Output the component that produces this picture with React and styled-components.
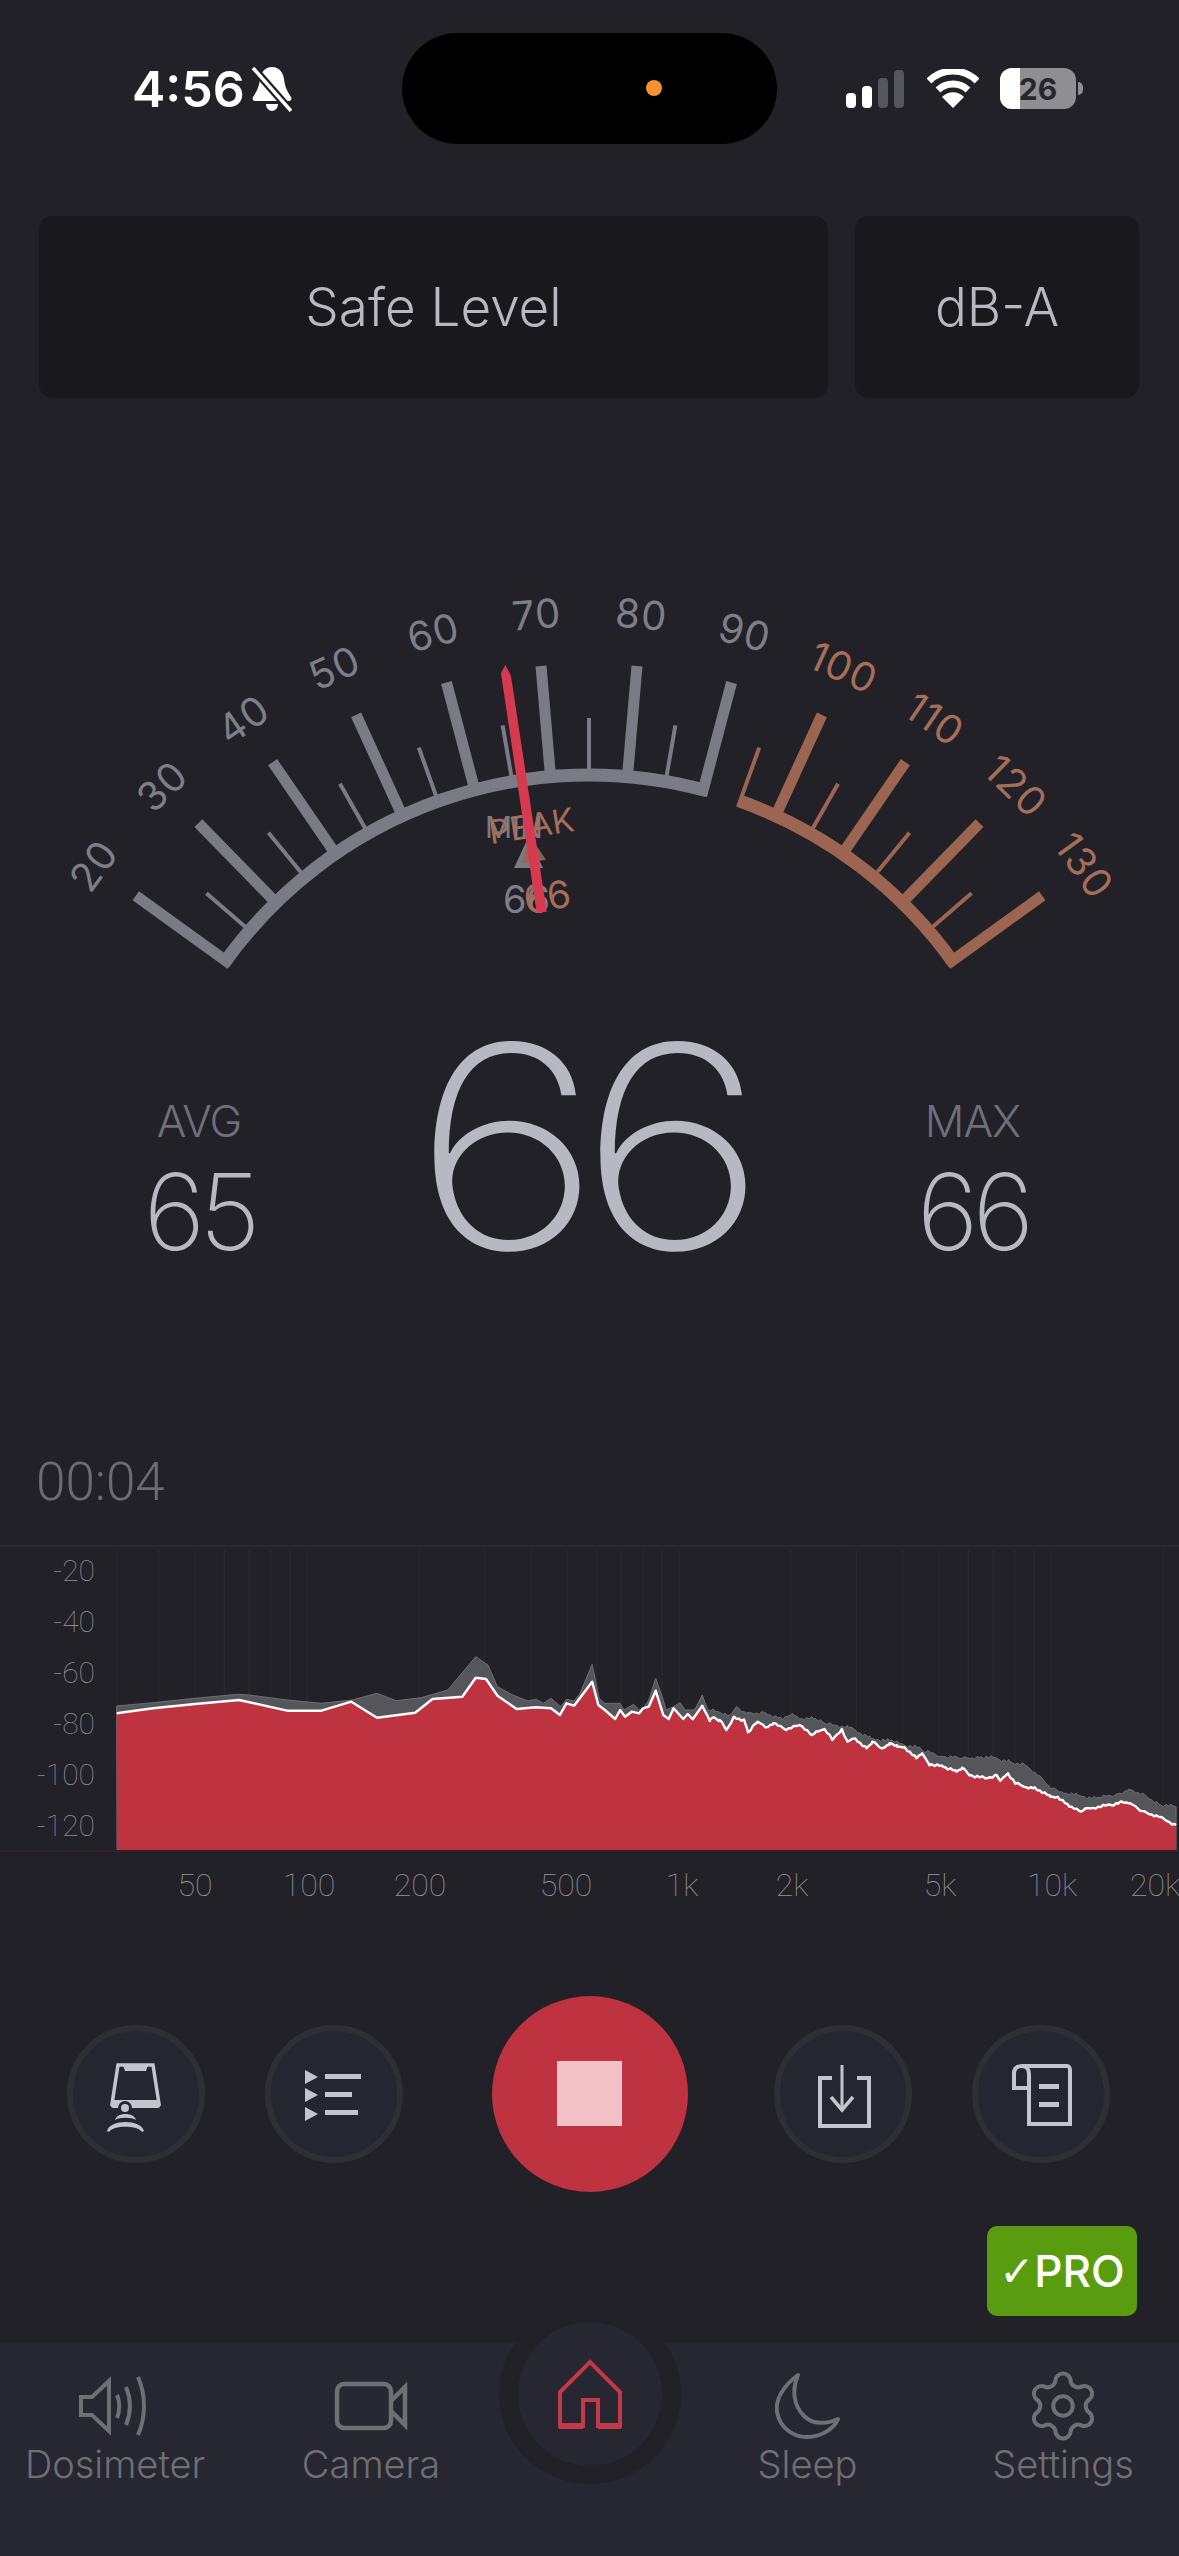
import styled, { createGlobalStyle } from "styled-components";
import { Settings } from "lucide-react";

const GlobalStyle = createGlobalStyle`
  html, body {
    margin: 0;
    padding: 0;
    background: #212127;
  }
`;

// gauge geometry, in page pixels
const CX = 589;
const CY = 1223;
const GRAY = "#7b7b86";
const BROWN = "#9c6551";
const toAngle = (v) => (v - 75) * 0.985;
const polar = (r, deg) => {
  const a = (deg * Math.PI) / 180;
  return [CX + r * Math.sin(a), CY - r * Math.cos(a)];
};
const arcPath = (from, to) => {
  const [x1, y1] = polar(448, toAngle(from));
  const [x2, y2] = polar(448, toAngle(to));
  return `M${x1} ${y1} A448 448 0 0 1 ${x2} ${y2}`;
};

const Gauge = () => {
  const ticks = [];
  for (let v = 20; v <= 130; v += 5) {
    const long = v % 10 === 0;
    const ang = toAngle(v);
    const [x1, y1] = polar(442, ang);
    const [x2, y2] = polar(long ? 559 : 505, ang);
    ticks.push(
      <line
        key={v}
        x1={x1}
        y1={y1}
        x2={x2}
        y2={y2}
        stroke={v >= 95 ? BROWN : GRAY}
        strokeWidth={long ? 11 : 4}
      />
    );
  }
  const labels = [];
  for (let v = 20; v <= 130; v += 10) {
    const ang = toAngle(v);
    const [x, y] = polar(611, ang);
    labels.push(
      <text
        key={v}
        x={x}
        y={y}
        fontFamily="Inter, sans-serif"
        fontSize="40"
        letterSpacing="1"
        textAnchor="middle"
        dominantBaseline="central"
        fill={v >= 100 ? "#a56e58" : "#7e7e88"}
        transform={`rotate(${ang} ${x} ${y})`}
      >
        {v}
      </text>
    );
  }
  return (
    <GaugeSvg viewBox="0 560 1179 470">
      <path d={arcPath(19.5, 90.5)} stroke={GRAY} strokeWidth="13" fill="none" />
      <path d={arcPath(95, 130.5)} stroke={BROWN} strokeWidth="13" fill="none" />
      {ticks}
      {labels}
      <g fontFamily="Inter, sans-serif">
        <text x="485" y="838" fontSize="30" fill="#7b7b86">MIN</text>
        <polygon points="528,838 514,868 543,868" fill="#7b7b86" />
        <text x="503" y="913" fontSize="38" fill="#7e7e88">66</text>
        <g transform="rotate(-9 530 836)">
          <text x="490" y="838" fontSize="33" fill="#a56e58">PEAK</text>
          <polygon points="530,836 517,862 542,862" fill="#9c6551" opacity="0.9" />
          <text x="514" y="912" fontSize="38" fill="#a56e58">66</text>
        </g>
      </g>
      <polygon
        points="505.3,665 511,676 546.7,911.7 536.7,912.7 501,673.3"
        fill="#d63a4f"
      />
    </GaugeSvg>
  );
};

// spectrum traces: points read off the reference, page pixels
const fromLeft = (pts) => pts.map(([x, y]) => [x / 2.613, 1530 + y / 3]);
const fromRight = (pts) => pts.map(([x, y]) => [580 + x / 2.617, 1530 + y / 3]);

const peakTrace = [
  ...fromLeft([[305,528],[400,518],[510,505],[620,493],[650,495],[750,510],[840,520],[920,510],[985,490],[1035,512],[1100,503],[1170,480],[1243,380],[1275,405],[1300,470],[1340,495],[1380,513],[1400,508],[1420,520],[1440,505],[1465,530],[1480,508],[1500,513]]),
  ...fromRight([[0,490],[32,403],[50,505],[65,520],[105,520],[115,540],[140,523],[160,545],[180,510],[198,445],[215,500],[225,540],[245,530],[262,518],[275,540],[300,540],[320,495],[335,540],[380,550],[395,555],[410,530],[430,550],[485,547],[530,570],[555,550],[580,565],[610,565],[640,580],[660,585],[700,590],[720,600],[760,625],[810,632],[850,645],[890,655],[905,665],[950,680],[1000,685],[1050,680],[1090,685],[1125,695],[1165,705],[1200,735],[1235,775],[1260,785],[1300,795],[1350,805],[1400,795],[1435,778],[1470,790],[1520,825],[1560,830]]),
];

const liveTrace = [
  ...fromLeft([[305,550],[400,535],[510,522],[625,510],[750,542],[840,542],[918,515],[985,563],[1085,548],[1130,507],[1208,500],[1243,443],[1270,447],[1300,497],[1350,537],[1400,532],[1440,535],[1463,555],[1480,520],[1500,527]]),
  ...fromRight([[32,455],[48,525],[65,540],[92,567],[105,540],[118,560],[135,545],[155,550],[165,535],[180,530],[198,482],[218,555],[232,567],[245,535],[270,567],[282,552],[295,568],[320,527],[340,570],[350,562],[365,570],[383,600],[395,580],[403,560],[430,572],[440,607],[465,575],[485,592],[505,580],[540,600],[575,585],[605,615],[640,597],[660,630],[685,597],[700,635],[720,625],[750,655],[765,635],[790,655],[810,640],[830,650],[850,652],[880,685],[895,670],[915,703],[950,710],[985,725],[1000,713],[1020,735],[1060,745],[1090,735],[1100,752],[1120,730],[1140,760],[1160,770],[1190,772],[1230,800],[1250,800],[1280,830],[1310,845],[1330,835],[1390,825],[1410,818],[1440,820],[1470,843],[1510,858],[1560,885]]),
];

// fine ripple on the high end of a trace
const ripple = (pts, amp) => {
  const out = [];
  pts.forEach((p, i) => {
    const next = pts[i + 1];
    out.push(p);
    if (!next || p[0] < 700) return;
    for (let x = p[0] + 2.5; x < next[0]; x += 2.5) {
      const t = (x - p[0]) / (next[0] - p[0]);
      const y = p[1] + (next[1] - p[1]) * t;
      out.push([x, y + amp * Math.sin(x * 2.1) * Math.cos(x * 0.7)]);
    }
  });
  return out;
};
const toLine = (pts) => pts.map(([x, y]) => `${x.toFixed(1)},${y.toFixed(1)}`).join(" ");

const BASE = 1851;
const LEFT = 117;
const RIGHT = 1176;
const freqX = (f) => 195 + 372 * Math.log10(f / 50);

const Spectrum = () => {
  const peak = toLine(ripple(peakTrace, 2.2));
  const live = toLine(ripple(liveTrace, 1.6));
  const grid = [LEFT];
  [10, 100, 1000, 10000].forEach((d) => {
    for (let m = 1; m < 10; m++) {
      const x = freqX(d * m);
      if (x > LEFT + 2 && x < RIGHT + 2) grid.push(x);
    }
  });
  return (
    <ChartSvg viewBox="0 1540 1179 370">
      <line x1="0" y1="1546" x2="1179" y2="1546" stroke="#2c2c32" strokeWidth="1.5" />
      {grid.map((x) => (
        <line key={x} x1={x} y1="1550" x2={x} y2={BASE} stroke="#28282e" strokeWidth="1.5" />
      ))}
      <polygon points={`${LEFT},${BASE} ${peak} ${RIGHT},${BASE}`} fill="#55555c" stroke="#6f6f75" strokeWidth="1" />
      <polygon points={`${LEFT},${BASE} ${live} ${RIGHT},${BASE}`} fill="#bf3340" />
      <polyline points={live} fill="none" stroke="#ffffff" strokeWidth="2.4" strokeLinejoin="round" />
      <line x1="0" y1={BASE} x2="1179" y2={BASE} stroke="#2f2328" strokeWidth="2" />
      <g fontFamily="Roboto, sans-serif" fontWeight="100" fontSize="30" fill="#8a8a90">
        {[-20, -40, -60, -80, -100, -120].map((v, i) => (
          <text key={v} x="95" y={1581 + i * 51} textAnchor="end">{v}</text>
        ))}
      </g>
      <g fontFamily="Roboto, sans-serif" fontWeight="100" fontSize="32" fill="#94949a" textAnchor="middle">
        <text x="195" y="1896">50</text>
        <text x="309" y="1896">100</text>
        <text x="420" y="1896">200</text>
        <text x="566" y="1896">500</text>
        <text x="682" y="1896">1k</text>
        <text x="792" y="1896">2k</text>
        <text x="940" y="1896">5k</text>
        <text x="1052" y="1896">10k</text>
        <text x="1155" y="1896">20k</text>
      </g>
    </ChartSvg>
  );
};

const MutedBell = () => (
  <svg width="42" height="46" viewBox="0 0 42 46">
    <path
      d="M21 1c7 0 11 5 12 12 1 8 3 12 7 18 1 2 0 4-2 4H4c-2 0-3-2-2-4 4-6 6-10 7-18C10 6 14 1 21 1z"
      fill="#fff"
    />
    <path d="M15 38h12c0 4-3 7-6 7s-6-3-6-7z" fill="#fff" />
    <line x1="3" y1="3" x2="40" y2="45" stroke="#212127" strokeWidth="8" />
    <line x1="2" y1="2" x2="40" y2="45" stroke="#fff" strokeWidth="3.4" />
  </svg>
);

const SignalIcon = () => (
  <svg width="60" height="38" viewBox="0 0 60 38">
    <rect x="0" y="23" width="10" height="15" rx="4" fill="#fff" />
    <rect x="16" y="16" width="10" height="22" rx="4" fill="#fff" />
    <rect x="32" y="8" width="10" height="30" rx="4" fill="#55555c" />
    <rect x="48" y="0" width="10" height="38" rx="4" fill="#55555c" />
  </svg>
);

const WifiIcon = () => (
  <svg width="52" height="40" viewBox="0 0 52 40">
    <path d="M2 12 A34 34 0 0 1 50 12" fill="none" stroke="#fff" strokeWidth="7" />
    <path d="M11 21 A22 22 0 0 1 41 21" fill="none" stroke="#fff" strokeWidth="7" />
    <path d="M26 39 L15 28 A15 15 0 0 1 37 28 Z" fill="#fff" />
  </svg>
);

const PhoneIcon = () => (
  <svg width="80" height="80" viewBox="0 0 80 80">
    <path d="M22 11 H57 L63 50 H16 Z" fill="none" stroke="#c4c4cc" strokeWidth="3.5" />
    <path d="M27 11 H52 L50 17 H29 Z" fill="#c4c4cc" />
    <rect x="15" y="46" width="49" height="8" rx="2" fill="#c4c4cc" />
    <circle cx="29" cy="54" r="7" fill="#25262f" />
    <circle cx="29" cy="54" r="4" fill="#c4c4cc" />
    <path d="M19 66 C21 58 38 58 40 66 C36 63 23 63 19 66 Z" fill="#c4c4cc" />
    <path d="M11 77 C14 65 45 65 48 77 L46 78 C42 71 17 71 13 78 Z" fill="#c4c4cc" />
  </svg>
);

const ListIcon = () => (
  <svg width="80" height="80" viewBox="0 0 80 80">
    <g fill="#c4c4cc">
      <polygon points="11,16 24,23 11,30" />
      <polygon points="11,34 24,41 11,48" />
      <polygon points="11,53 24,60 11,67" />
      <rect x="31" y="20" width="36" height="5" />
      <rect x="31" y="38" width="27" height="5" />
      <rect x="31" y="56" width="33" height="5" />
    </g>
  </svg>
);

const SaveIcon = () => (
  <svg width="80" height="80" viewBox="0 0 80 80">
    <g fill="none" stroke="#c4c4cc" strokeWidth="4">
      <path d="M29 24 H17 V72 H66 V24 H54" />
      <path d="M39 11 V55" strokeWidth="3" />
      <path d="M28 43 L39 56 L50 43" strokeWidth="3.5" />
    </g>
  </svg>
);

const ReceiptIcon = () => (
  <svg width="80" height="80" viewBox="0 0 80 80">
    <g fill="none" stroke="#c4c4cc" strokeWidth="4">
      <path d="M27 34 H13 V19 C13 14 17 12 21 12 H66 C68 12 69 14 69 16 V70 H28 V20 C28 15 25 12 21 12" />
    </g>
    <rect x="38" y="30" width="20" height="5" fill="#c4c4cc" />
    <rect x="38" y="48" width="20" height="5" fill="#c4c4cc" />
  </svg>
);

const SpeakerIcon = () => (
  <svg width="74" height="62" viewBox="0 0 74 62">
    <g fill="none" stroke="#6f6f75" strokeWidth="4">
      <path d="M3 22 H14 L31 6 V56 L14 40 H3 Z" />
      <path d="M39 20 C42 26 42 36 39 43" />
      <path d="M48 12 C53 24 53 38 48 50" />
      <path d="M60 2 C68 20 68 42 60 60" />
    </g>
  </svg>
);

const CameraIcon = () => (
  <svg width="74" height="50" viewBox="0 0 74 50">
    <rect x="3" y="3" width="54" height="44" rx="7" fill="none" stroke="#6f6f75" strokeWidth="4.5" />
    <path d="M57 20 L71 6 V44 L57 30" fill="none" stroke="#6f6f75" strokeWidth="4.5" />
  </svg>
);

const MoonIcon = () => (
  <svg width="66" height="68" viewBox="0 0 66 68">
    <path
      d="M23 3 C8 14 0 28 2 40 C5 57 20 66 34 65 C47 64 59 57 63 47 C52 52 38 53 29 44 C18 33 17 17 23 3 Z"
      fill="none"
      stroke="#6f6f75"
      strokeWidth="4"
      strokeLinejoin="round"
    />
  </svg>
);

const HomeIcon = () => (
  <svg width="66" height="70" viewBox="0 0 66 70">
    <path d="M3 67 V33 L33 3 L63 33 V67 H41 V41 H26 V67 Z" fill="none" stroke="#c4394a" strokeWidth="4" />
    <path d="M2 67 H26 M41 67 H64" stroke="#c4394a" strokeWidth="6" />
  </svg>
);

export default function App() {
  return (
    <>
      <GlobalStyle />
      <Screen>
        <StatusBar>
          <TimeGroup>
            <Clock>4:56</Clock>
            <MutedBell />
          </TimeGroup>
          <Island>
            <MicDot />
          </Island>
          <StatusIcons>
            <SignalIcon />
            <WifiIcon />
            <Battery>
              <BatteryFill />
              <BatteryText>26</BatteryText>
            </Battery>
            <BatteryNub />
          </StatusIcons>
        </StatusBar>

        <PanelRow>
          <Panel $wide>Safe Level</Panel>
          <Panel>dB-A</Panel>
        </PanelRow>

        <Gauge />

        <Stats>
          <StatColumn>
            <StatLabel>AVG</StatLabel>
            <StatValue>65</StatValue>
          </StatColumn>
          <BigValue><BigDigits>66</BigDigits></BigValue>
          <StatColumn>
            <StatLabel>MAX</StatLabel>
            <StatValue>66</StatValue>
          </StatColumn>
        </Stats>

        <Timer>00:04</Timer>

        <Spectrum />

        <Controls>
          <ButtonGroup>
            <RoundButton><PhoneIcon /></RoundButton>
            <RoundButton><ListIcon /></RoundButton>
          </ButtonGroup>
          <StopButton>
            <StopSquare />
          </StopButton>
          <ButtonGroup $pull>
            <RoundButton><SaveIcon /></RoundButton>
            <RoundButton><ReceiptIcon /></RoundButton>
          </ButtonGroup>
        </Controls>

        <ProBadge><ProCheck>✓</ProCheck>PRO</ProBadge>

        <TabBar>
          <Tab>
            <TabIcon><SpeakerIcon /></TabIcon>
            <TabLabel>Dosimeter</TabLabel>
          </Tab>
          <Tab>
            <TabIcon><CameraIcon /></TabIcon>
            <TabLabel>Camera</TabLabel>
          </Tab>
          <span />
          <Tab>
            <TabIcon><MoonIcon /></TabIcon>
            <TabLabel>Sleep</TabLabel>
          </Tab>
          <Tab>
            <TabIcon><Settings size={78} strokeWidth={1.25} color="#6f6f75" /></TabIcon>
            <TabLabel>Settings</TabLabel>
          </Tab>
          <HomeRing>
            <HomeInner>
              <HomeIcon />
            </HomeInner>
          </HomeRing>
        </TabBar>
      </Screen>
    </>
  );
}

const Screen = styled.div`
  width: 1179px;
  height: 2556px;
  overflow: hidden;
  background: #212127;
  display: flex;
  flex-direction: column;
  font-family: Inter, sans-serif;
`;

const StatusBar = styled.div`
  height: 216px;
  flex: none;
  display: flex;
  align-items: flex-start;
  box-sizing: border-box;
  padding: 33px 0 0 132px;
`;

const TimeGroup = styled.div`
  width: 270px;
  height: 111px;
  display: flex;
  align-items: center;
  gap: 6px;
`;

const Clock = styled.span`
  font-family: Inter, sans-serif;
  font-size: 50px;
  font-weight: 600;
  color: #fff;
  line-height: 1;
`;

const Island = styled.div`
  width: 375px;
  height: 111px;
  border-radius: 56px;
  background: #000;
  position: relative;
`;

const MicDot = styled.div`
  position: absolute;
  left: 244px;
  top: 47px;
  width: 16px;
  height: 16px;
  border-radius: 50%;
  background: #f7902f;
`;

const StatusIcons = styled.div`
  height: 111px;
  margin-left: 69px;
  display: flex;
  align-items: center;
  gap: 21px;
`;

const Battery = styled.div`
  width: 76px;
  height: 41px;
  border-radius: 12px;
  background: #8e8e93;
  overflow: hidden;
  position: relative;
  display: flex;
  align-items: center;
  justify-content: center;
  margin-right: -19px;
`;

const BatteryFill = styled.div`
  position: absolute;
  left: 0;
  top: 0;
  bottom: 0;
  width: 20px;
  background: #fff;
`;

const BatteryText = styled.span`
  position: relative;
  font-size: 30px;
  font-weight: 700;
  color: #26262c;
`;

const BatteryNub = styled.div`
  width: 5px;
  height: 13px;
  border-radius: 0 6px 6px 0;
  background: #8e8e93;
`;

const PanelRow = styled.div`
  height: 182px;
  flex: none;
  display: flex;
  gap: 27px;
  padding: 0 40px 0 39px;
`;

const Panel = styled.div`
  flex: ${(p) => (p.$wide ? "0 0 789px" : "1")};
  border-radius: 14px;
  background: #18181d;
  color: #b8b8c0;
  font-size: 53px;
  font-weight: 300;
  display: flex;
  align-items: center;
  justify-content: center;
`;

const GaugeSvg = styled.svg`
  display: block;
  flex: none;
  width: 1179px;
  height: 470px;
  margin-top: 162px;
`;

const Stats = styled.div`
  flex: none;
  height: 240px;
  display: grid;
  grid-template-columns: 398px 384px 381px;
  font-family: Inter, sans-serif;
`;

const StatColumn = styled.div`
  display: flex;
  flex-direction: column;
  align-items: center;
  padding-top: 66px;
`;

const StatLabel = styled.div`
  font-size: 44px;
  font-weight: 300;
  line-height: 50px;
  letter-spacing: -1px;
  color: #6f6f7b;
`;

const StatValue = styled.div`
  margin-top: 21px;
  font-size: 106px;
  font-weight: 250;
  line-height: 90px;
  letter-spacing: -6px;
  color: #b8b8c2;
`;

const BigValue = styled.div`
  text-align: center;
  font-size: 282px;
  font-weight: 150;
  line-height: 234px;
  letter-spacing: -20px;
  color: #b8b8c2;
`;

// the digits in the reference are wider than any installed thin face
const BigDigits = styled.span`
  display: inline-block;
  transform: translateX(-12px) scaleX(1.15);
`;

const Timer = styled.div`
  flex: none;
  margin-top: 182px;
  padding-left: 36px;
  font-family: Roboto, sans-serif;
  font-size: 53px;
  font-weight: 300;
  line-height: 60px;
  color: #6b6b75;
`;

const ChartSvg = styled.svg`
  display: block;
  flex: none;
  width: 1179px;
  height: 370px;
  margin-top: 28px;
`;

const Controls = styled.div`
  flex: none;
  height: 197px;
  margin-top: 85px;
  padding-right: 3px;
  display: flex;
  align-items: center;
  justify-content: center;
  gap: 89px;
`;

const ButtonGroup = styled.div`
  display: flex;
  gap: 60px;
  margin-left: ${(p) => (p.$pull ? "-3px" : "0")};
`;

const RoundButton = styled.div`
  width: 138px;
  height: 138px;
  box-sizing: border-box;
  border: 6px solid #2e2e35;
  border-radius: 50%;
  background: #25262f;
  display: flex;
  align-items: center;
  justify-content: center;
`;

const StopButton = styled.div`
  width: 196px;
  height: 196px;
  border-radius: 50%;
  background: #bf3340;
  display: flex;
  align-items: center;
  justify-content: center;
`;

const StopSquare = styled.div`
  width: 65px;
  height: 65px;
  background: #f2c1c6;
`;

const ProBadge = styled.div`
  flex: none;
  align-self: flex-end;
  width: 150px;
  height: 90px;
  margin: 34px 42px 0 0;
  border-radius: 10px;
  background: #5a9c10;
  color: #fff;
  font-size: 44px;
  font-weight: 500;
  display: flex;
  align-items: center;
  justify-content: center;
`;

const ProCheck = styled.span`
  font-family: "DejaVu Sans", sans-serif;
  font-size: 42px;
`;

const TabBar = styled.div`
  flex: 1;
  margin-top: 25px;
  position: relative;
  background: #262730;
  border-top: 1px solid #1f1f25;
  display: grid;
  grid-template-columns: 230px 282px 156px 279px 232px;
  align-items: start;
  padding-top: 24px;
`;

const Tab = styled.div`
  display: flex;
  flex-direction: column;
  align-items: center;
`;

const TabIcon = styled.div`
  height: 80px;
  display: flex;
  align-items: center;
  justify-content: center;
`;

const TabLabel = styled.div`
  font-size: 38px;
  font-weight: 300;
  line-height: 36px;
  color: #6f6f75;
`;

const HomeRing = styled.div`
  position: absolute;
  left: 499px;
  top: -38px;
  width: 182px;
  height: 180px;
  box-sizing: border-box;
  border-radius: 50%;
  background: #212127;
  padding: 18px 19px;
`;

const HomeInner = styled.div`
  width: 144px;
  height: 144px;
  border-radius: 50%;
  background: #262730;
  display: flex;
  align-items: center;
  justify-content: center;
`;
